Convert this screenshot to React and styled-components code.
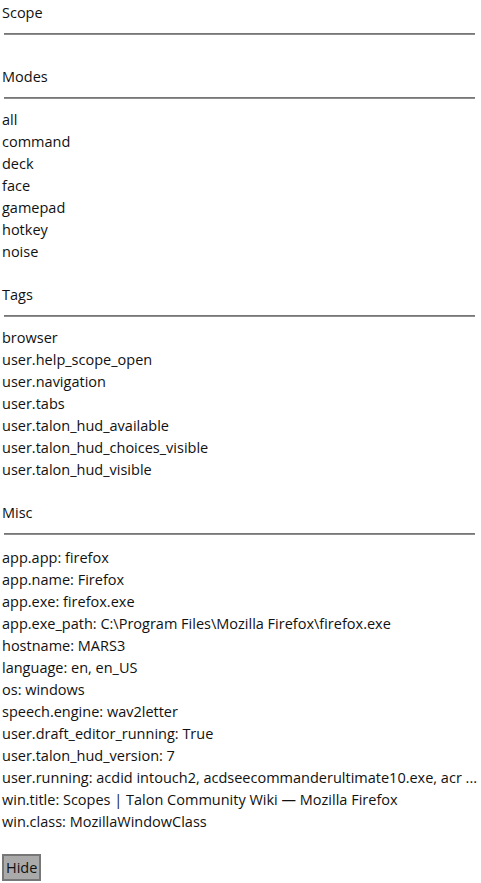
import React from "react";
import styled, { createGlobalStyle } from "styled-components";

const GlobalStyle = createGlobalStyle`
  body {
    margin: 0;
    background: #ffffff;
    color: #111111;
    font-family: "Open Sans", "Noto Sans", sans-serif;
    font-size: 14.5px;
  }
`;

const sections = [
  { title: "Scope", items: [] },
  {
    title: "Modes",
    items: ["all", "command", "deck", "face", "gamepad", "hotkey", "noise"],
  },
  {
    title: "Tags",
    items: [
      "browser",
      "user.help_scope_open",
      "user.navigation",
      "user.tabs",
      "user.talon_hud_available",
      "user.talon_hud_choices_visible",
      "user.talon_hud_visible",
    ],
  },
  {
    title: "Misc",
    items: [
      "app.app: firefox",
      "app.name: Firefox",
      "app.exe: firefox.exe",
      "app.exe_path: C:\\Program Files\\Mozilla Firefox\\firefox.exe",
      "hostname: MARS3",
      "language: en, en_US",
      "os: windows",
      "speech.engine: wav2letter",
      "user.draft_editor_running: True",
      "user.talon_hud_version: 7",
      "user.running: acdid intouch2, acdseecommanderultimate10.exe, acr ...",
      "win.title: Scopes | Talon Community Wiki — Mozilla Firefox",
      "win.class: MozillaWindowClass",
    ],
  },
];

const Page = styled.div`
  display: flex;
  flex-direction: column;
  gap: 21px;
  padding: 2px 6px 0 2px;
`;

const Section = styled.section`
  display: flex;
  flex-direction: column;
`;

const Title = styled.div`
  line-height: 22px;
`;

const Rule = styled.div`
  height: 2px;
  margin: 9px 0 ${(p) => (p.$wide ? 12 : 10)}px 2px;
  background: linear-gradient(#6a6a6a, #9a9a9a);
`;

const Item = styled.div`
  line-height: 22px;
  white-space: nowrap;
`;

const HideButton = styled.button`
  align-self: flex-start;
  height: 27px;
  padding: 0 2px;
  border: 2px solid #777777;
  background: #aaaaaa;
  color: #111111;
  font-family: inherit;
  font-size: 14.5px;
  line-height: 21px;
`;

export default function App() {
  return (
    <>
      <GlobalStyle />
      <Page>
        {sections.map((s) => (
          <Section key={s.title}>
            <Title>{s.title}</Title>
            <Rule $wide={s.title === "Misc"} />
            {s.items.map((it) => (
              <Item key={it}>{it}</Item>
            ))}
          </Section>
        ))}
        <HideButton>Hide</HideButton>
      </Page>
    </>
  );
}
